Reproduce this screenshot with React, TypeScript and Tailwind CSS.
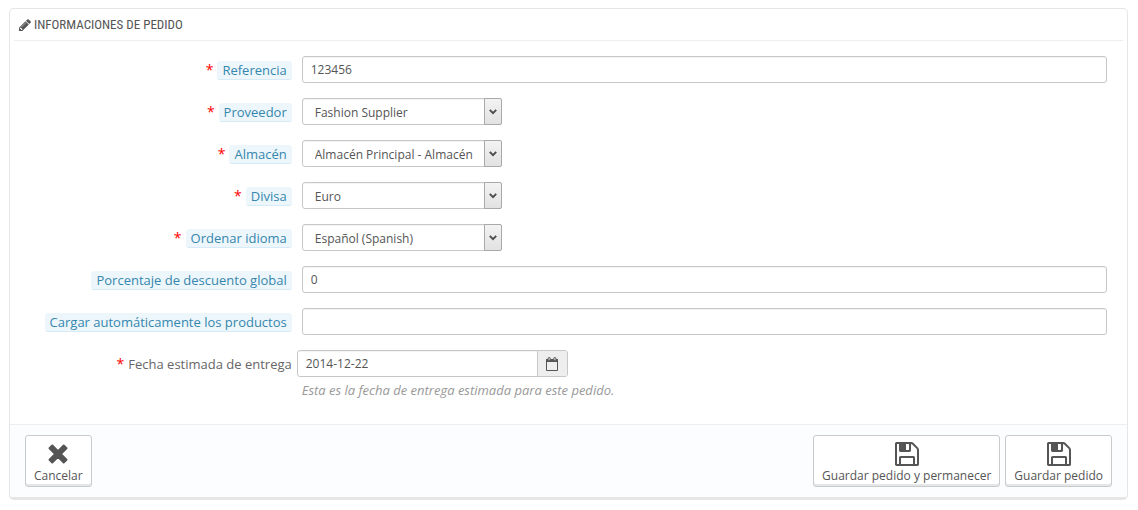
import { useState, type ReactNode } from "react";

const inputClass =
  "block h-[27px] w-full rounded-[3px] border border-[#c7c7c7] bg-white px-2 text-xs leading-4 text-[#555] shadow-[inset_0_1px_1px_rgba(0,0,0,0.05)] outline-none focus:border-[#66afe9]";

function PencilIcon() {
  return (
    <svg viewBox="0 0 1536 1536" className="size-3 shrink-0 fill-[#555]" aria-hidden="true">
      <path d="M363 1408l91-91-235-235-91 91v107h128v128zM886 480q0-22-22-22-10 0-17 7l-542 542q-7 7-7 17 0 22 22 22 10 0 17-7l542-542q7-7 7-17zM832 288l416 416-832 832H0v-416zM1515 384q0 53-37 90l-166 166-416-416 166-165q36-38 90-38 53 0 91 38l235 234q37 39 37 91z" />
    </svg>
  );
}

function CalendarIcon() {
  return (
    <svg viewBox="0 0 14 14" className="size-3.5" aria-hidden="true">
      <path d="M1.500 3.500h11v10h-11z" fill="none" stroke="#555" strokeLinejoin="round" />
      <path d="M1 2h12v3H1z" fill="#555" />
      <rect x="3" y=".4" width="2.400" height="3.200" rx="1.200" fill="#bbb" stroke="#555" strokeWidth=".8" />
      <rect x="8.600" y=".4" width="2.400" height="3.200" rx="1.200" fill="#bbb" stroke="#555" strokeWidth=".8" />
    </svg>
  );
}

function CancelIcon() {
  return (
    <svg viewBox="0 0 20 20" className="size-5" aria-hidden="true">
      <path
        d="M4.300 1.500L10 7.200l5.700-5.700 2.800 2.800L12.800 10l5.700 5.700-2.800 2.800L10 12.800l-5.700 5.700-2.800-2.800L7.200 10 1.500 4.300z"
        fill="#555"
        stroke="#555"
        strokeWidth="2"
        strokeLinejoin="round"
      />
    </svg>
  );
}

function SaveIcon() {
  return (
    <svg viewBox="0 0 1536 1536" className="size-6 fill-[#555]" aria-hidden="true">
      <path d="M384 1408h768v-384H384v384zm896 0h128V512q0-14-10-38.500t-20-34.500l-281-281q-10-10-34-20t-39-10v416q0 40-28 68t-68 28H352q-40 0-68-28t-28-68V128H128v1280h128V992q0-40 28-68t68-28h832q40 0 68 28t28 68v416zM896 480V160q0-13-9.500-22.500T864 128H672q-13 0-22.500 9.500T640 160v320q0 13 9.500 22.500T672 512h192q13 0 22.500-9.500T896 480zm640 32v928q0 40-28 68t-68 28H96q-40 0-68-28t-28-68V96q0-40 28-68T96 0h928q40 0 88 20t76 48l280 280q28 28 48 76t20 88z" />
      <path d="M320 96h384v448H320z" />
    </svg>
  );
}

function Row({
  id,
  label,
  required = false,
  plain = false,
  children,
}: {
  id: string;
  label: string;
  required?: boolean;
  plain?: boolean;
  children: ReactNode;
}) {
  return (
    <div className="grid grid-cols-[1fr_3fr]">
      <label htmlFor={id} className="flex h-[27px] items-start justify-end gap-1 pt-[5px] pr-[5px] text-[13px] whitespace-nowrap">
        {required && <span className="text-sm leading-[18px] text-[#f00]">*</span>}
        {plain ? (
          <span className="leading-[18px] text-[#666]">{label}</span>
        ) : (
          <span className="rounded-[3px] border-b border-[#d5ebf7] bg-[#edf7fb] px-[5px] leading-[18px] text-[#3586ae]">
            {label}
          </span>
        )}
      </label>
      <div className="min-w-0">{children}</div>
    </div>
  );
}

function TextRow({ id, label, value, required }: { id: string; label: string; value: string; required?: boolean }) {
  const [text, setText] = useState(value);
  return (
    <Row id={id} label={label} required={required}>
      <div className="px-[5px]">
        <input id={id} type="text" value={text} onChange={(e) => setText(e.target.value)} className={inputClass} />
      </div>
    </Row>
  );
}

function SelectRow({ id, label, option }: { id: string; label: string; option: string }) {
  return (
    <Row id={id} label={label} required>
      <div className="grid w-[210px] px-[5px]">
        <select
          id={id}
          className="col-start-1 row-start-1 h-[27px] w-full appearance-none rounded-[3px] border border-[#c7c7c7] bg-white pt-0.5 pr-5 pl-3 text-xs leading-4 text-[#555] shadow-[inset_0_1px_1px_rgba(0,0,0,0.05)] outline-none"
        >
          <option>{option}</option>
        </select>
        <span className="pointer-events-none col-start-1 row-start-1 flex h-[27px] w-[18px] items-center justify-center justify-self-end rounded-r-[2px] border border-[#a9a9a9] bg-linear-to-b from-[#f3f3f3] to-[#e2e2e2]">
          <svg viewBox="0 0 8 6" className="h-1.5 w-2" aria-hidden="true">
            <path d="M.8.9L4 4.100 7.200.9" fill="none" stroke="#4d4d4d" strokeWidth="2" />
          </svg>
        </span>
      </div>
    </Row>
  );
}

function ActionButton({ icon, children }: { icon: ReactNode; children: ReactNode }) {
  return (
    <button
      type="button"
      className="flex h-[52px] cursor-pointer flex-col items-center rounded-[3px] border border-[#c7cbce] bg-white px-2 pt-1 text-xs leading-4 whitespace-nowrap text-[#555] shadow-[inset_0_-2px_0_#e6e6e6]"
    >
      <span className="flex h-7 items-center justify-center">{icon}</span>
      {children}
    </button>
  );
}

export default function App() {
  const [date, setDate] = useState("2014-12-22");
  return (
    <main className="min-h-screen bg-white pt-2 pr-2.5 pl-[9px] font-['Open_Sans',sans-serif]">
      <form
        onSubmit={(e) => e.preventDefault()}
        className="overflow-hidden rounded-[5px] border border-b-3 border-[#e6e6e6] bg-white"
      >
        <h1 className="mx-1 flex h-8 items-center gap-[3px] border-b border-[#eee] pl-[5px] font-['Ubuntu_Condensed','Roboto_Condensed','Liberation_Sans_Narrow',sans-serif] text-[13px] font-normal text-[#555]">
          <PencilIcon />
          INFORMACIONES DE PEDIDO
        </h1>
        <div className="flex flex-col gap-[15px] px-[15px] pt-[15px] pb-6">
          <TextRow id="referencia" label="Referencia" value="123456" required />
          <SelectRow id="proveedor" label="Proveedor" option="Fashion Supplier" />
          <SelectRow id="almacen" label="Almacén" option="Almacén Principal - Almacén" />
          <SelectRow id="divisa" label="Divisa" option="Euro" />
          <SelectRow id="idioma" label="Ordenar idioma" option="Español (Spanish)" />
          <TextRow id="descuento" label="Porcentaje de descuento global" value="0" />
          <TextRow id="productos" label="Cargar automáticamente los productos" value="" />
          <Row id="fecha" label="Fecha estimada de entrega" required plain>
            <div className="flex h-[27px] w-[271px] overflow-hidden rounded-[3px] border border-[#c7c7c7]">
              <input
                id="fecha"
                type="text"
                value={date}
                onChange={(e) => setDate(e.target.value)}
                className="min-w-0 flex-1 px-2 text-xs leading-4 text-[#555] shadow-[inset_0_1px_1px_rgba(0,0,0,0.05)] outline-none"
              />
              <span className="flex w-[30px] items-center justify-center border-l border-[#c7c7c7] bg-[#eee]">
                <CalendarIcon />
              </span>
            </div>
            <p className="mt-1 px-[5px] pb-px text-[13px] leading-[18px] text-[#999] italic">
              Esta es la fecha de entrega estimada para este pedido.
            </p>
          </Row>
        </div>
        <div className="flex justify-between border-t border-[#eee] bg-[#fcfdfe] px-[15px] py-2.5">
          <ActionButton icon={<CancelIcon />}>Cancelar</ActionButton>
          <div className="flex gap-[5px]">
            <ActionButton icon={<SaveIcon />}>Guardar pedido y permanecer</ActionButton>
            <ActionButton icon={<SaveIcon />}>Guardar pedido</ActionButton>
          </div>
        </div>
      </form>
    </main>
  );
}
